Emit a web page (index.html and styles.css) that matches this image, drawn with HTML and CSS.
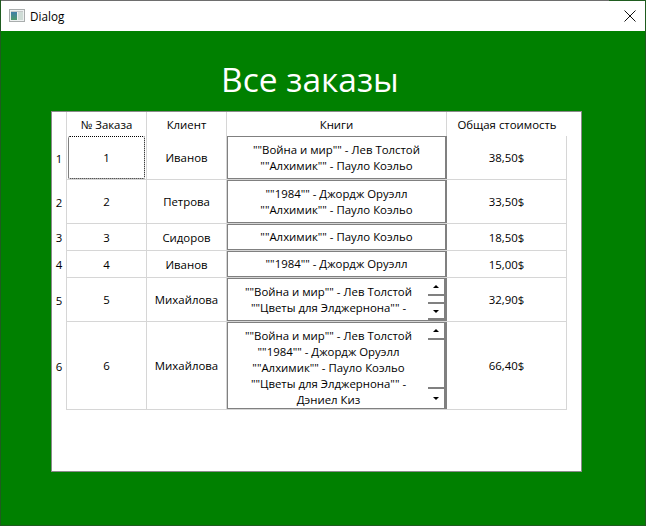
FILE: index.html
```html
<!DOCTYPE html>
<html>
  <head>
    <meta charset="utf-8">
    <link rel="stylesheet" href="styles.css">
    <title>Dialog</title>
  </head>
  <body>
    <div class="window">
      <div class="edge"></div>
      <div class="titlebar">
        <svg class="app-icon" width="16" height="16" viewBox="0 0 16 16">
          <defs>
            <linearGradient id="pane" x1="0" y1="0" x2="0" y2="1">
              <stop offset="0" stop-color="#3f7fa8"/>
              <stop offset="1" stop-color="#4f9a6c"/>
            </linearGradient>
          </defs>
          <rect x="0.5" y="1.5" width="15" height="12" fill="#eef1f1" stroke="#a9adad"/>
          <rect x="2" y="4" width="6" height="8" fill="url(#pane)"/>
          <rect x="9" y="4" width="5" height="8" fill="#cfdcd6"/>
          <rect x="2" y="3" width="12" height="1" fill="#c4c8c8"/>
        </svg>
        <span class="title-text">Dialog</span>
        <svg class="close-icon" width="12" height="12" viewBox="0 0 12 12">
          <path d="M0.5 0.5 L11.5 11.5 M11.5 0.5 L0.5 11.5" stroke="#111" stroke-width="1" fill="none"/>
        </svg>
      </div>
      <div class="content">
        <h1>Все заказы</h1>
        <div class="panel">
          <table>
            <colgroup>
              <col class="col-num">
              <col class="col-id">
              <col class="col-client">
              <col class="col-books">
              <col class="col-total">
            </colgroup>
            <thead>
              <tr>
                <th class="row-head"></th>
                <th>№ Заказа</th>
                <th>Клиент</th>
                <th>Книги</th>
                <th class="last">Общая стоимость</th>
              </tr>
            </thead>
            <tbody>
              <tr class="tall">
                <td class="row-head">1</td>
                <td class="focus-cell"><div class="focused">1</div></td>
                <td>Иванов</td>
                <td class="books"><div class="book-box">""Война и мир"" - Лев Толстой<br>""Алхимик"" - Пауло Коэльо</div></td>
                <td>38,50$</td>
              </tr>
              <tr class="tall">
                <td class="row-head">2</td>
                <td>2</td>
                <td>Петрова</td>
                <td class="books"><div class="book-box">""1984"" - Джордж Оруэлл<br>""Алхимик"" - Пауло Коэльо</div></td>
                <td>33,50$</td>
              </tr>
              <tr class="short">
                <td class="row-head">3</td>
                <td>3</td>
                <td>Сидоров</td>
                <td class="books"><div class="book-box">""Алхимик"" - Пауло Коэльо</div></td>
                <td>18,50$</td>
              </tr>
              <tr class="short">
                <td class="row-head">4</td>
                <td>4</td>
                <td>Иванов</td>
                <td class="books"><div class="book-box">""1984"" - Джордж Оруэлл</div></td>
                <td>15,00$</td>
              </tr>
              <tr class="tall">
                <td class="row-head">5</td>
                <td>5</td>
                <td>Михайлова</td>
                <td class="books">
                  <div class="book-box scrolled">
                    <div class="book-text">""Война и мир"" - Лев Толстой<br>""Цветы для Элджернона"" -<br>Дэниел Киз</div>
                    <div class="scrollbar">
                      <div class="btn-up"><span class="arrow-up"></span></div>
                      <div class="btn-down"><span class="arrow-down"></span></div>
                    </div>
                  </div>
                </td>
                <td>32,90$</td>
              </tr>
              <tr class="huge">
                <td class="row-head">6</td>
                <td>6</td>
                <td>Михайлова</td>
                <td class="books">
                  <div class="book-box scrolled">
                    <div class="book-text">""Война и мир"" - Лев Толстой<br>""1984"" - Джордж Оруэлл<br>""Алхимик"" - Пауло Коэльо<br>""Цветы для Элджернона"" -<br>Дэниел Киз</div>
                    <div class="scrollbar">
                      <div class="btn-up"><span class="arrow-up"></span></div>
                      <div class="btn-down big"><span class="arrow-down"></span></div>
                    </div>
                  </div>
                </td>
                <td>66,40$</td>
              </tr>
            </tbody>
          </table>
        </div>
      </div>
    </div>
  </body>
</html>
```

FILE: styles.css
```css
html, body {
  margin: 0;
  padding: 0;
}

body {
  font-family: "Open Sans", "Noto Sans", sans-serif;
  font-size: 11.4px;
  color: #000;
  background: #008000;
}

.window {
  width: 646px;
  height: 526px;
  box-sizing: border-box;
  display: flex;
  flex-direction: column;
  border-left: 1px solid #1f5c1f;
  border-right: 1px solid #1f5c1f;
  border-bottom: 1px solid #1f5c1f;
  overflow: hidden;
}

.edge {
  height: 1px;
  background: linear-gradient(to right, #6e6e6e 608px, #1f5c1f 608px);
}

.titlebar {
  height: 30px;
  background: #fff;
  display: flex;
  align-items: center;
  padding-left: 8px;
  padding-right: 9px;
}

.title-text {
  margin-left: 5px;
  font-size: 11.7px;
}

.close-icon {
  margin-left: auto;
}

.content {
  flex: 1;
  background: #008000;
}

h1 {
  margin: 22px 0 0 220px;
  height: 58px;
  line-height: 52px;
  font-size: 33.5px;
  font-weight: 400;
  color: #fff;
}

.panel {
  margin-left: 50px;
  width: 531px;
  height: 361px;
  box-sizing: border-box;
  background: #fff;
  border: 1px solid #8a8a8a;
}

table {
  table-layout: fixed;
  border-collapse: separate;
  border-spacing: 0;
  width: 515px;
}

.col-num { width: 15px; }
.col-id { width: 80px; }
.col-client { width: 80px; }
.col-books { width: 220px; }
.col-total { width: 120px; }

th, td {
  box-sizing: border-box;
  padding: 0;
  text-align: center;
  vertical-align: middle;
  font-weight: 400;
  border-right: 1px solid #d6d6d6;
}

th {
  height: 24px;
}

th.last {
  border-right: 0;
}

td {
  border-bottom: 1px solid #d6d6d6;
}

.row-head {
  border-bottom: 0;
}

.tall td { height: 44px; }
.short td { height: 27px; }
.huge td { height: 88px; }

td.books {
  border-right: 0;
}

.book-box {
  box-sizing: border-box;
  width: 220px;
  height: 43px;
  border: 1px solid #808080;
  border-right-width: 2px;
  line-height: 16px;
  display: flex;
  flex-direction: column;
  justify-content: center;
}

.short .book-box {
  height: 26px;
}

.huge .book-box {
  height: 87px;
}

.book-box.scrolled {
  position: relative;
  display: block;
  overflow: hidden;
  padding-top: 5px;
  border-right-width: 3px;
}

.book-text {
  width: 201px;
}

.focused {
  box-sizing: border-box;
  height: 43px;
  margin-left: 1px;
  margin-right: 1px;
  border: 1px dotted #000;
  border-radius: 2px;
  display: flex;
  align-items: center;
  justify-content: center;
}

/* the scrollbar lies over the text box */
.scrollbar {
  position: absolute;
  top: 0;
  right: 0;
  bottom: 0;
  width: 16px;
  display: flex;
  flex-direction: column;
  justify-content: space-between;
  background: #fff;
}

.btn-up, .btn-down {
  box-sizing: border-box;
  height: 17px;
  display: flex;
  align-items: center;
  justify-content: center;
  background: #fff;
}

.btn-up {
  border-bottom: 2px solid #808080;
}

.btn-down {
  height: 18px;
  border-top: 2px solid #808080;
  border-bottom: 2px solid #808080;
}

.btn-down.big {
  height: 21px;
  border-bottom: 0;
}

.arrow-up {
  width: 0;
  height: 0;
  border-left: 3px solid transparent;
  border-right: 3px solid transparent;
  border-bottom: 3px solid #000;
}

.arrow-down {
  width: 0;
  height: 0;
  border-left: 3.5px solid transparent;
  border-right: 3.5px solid transparent;
  border-top: 3px solid #000;
}
```
